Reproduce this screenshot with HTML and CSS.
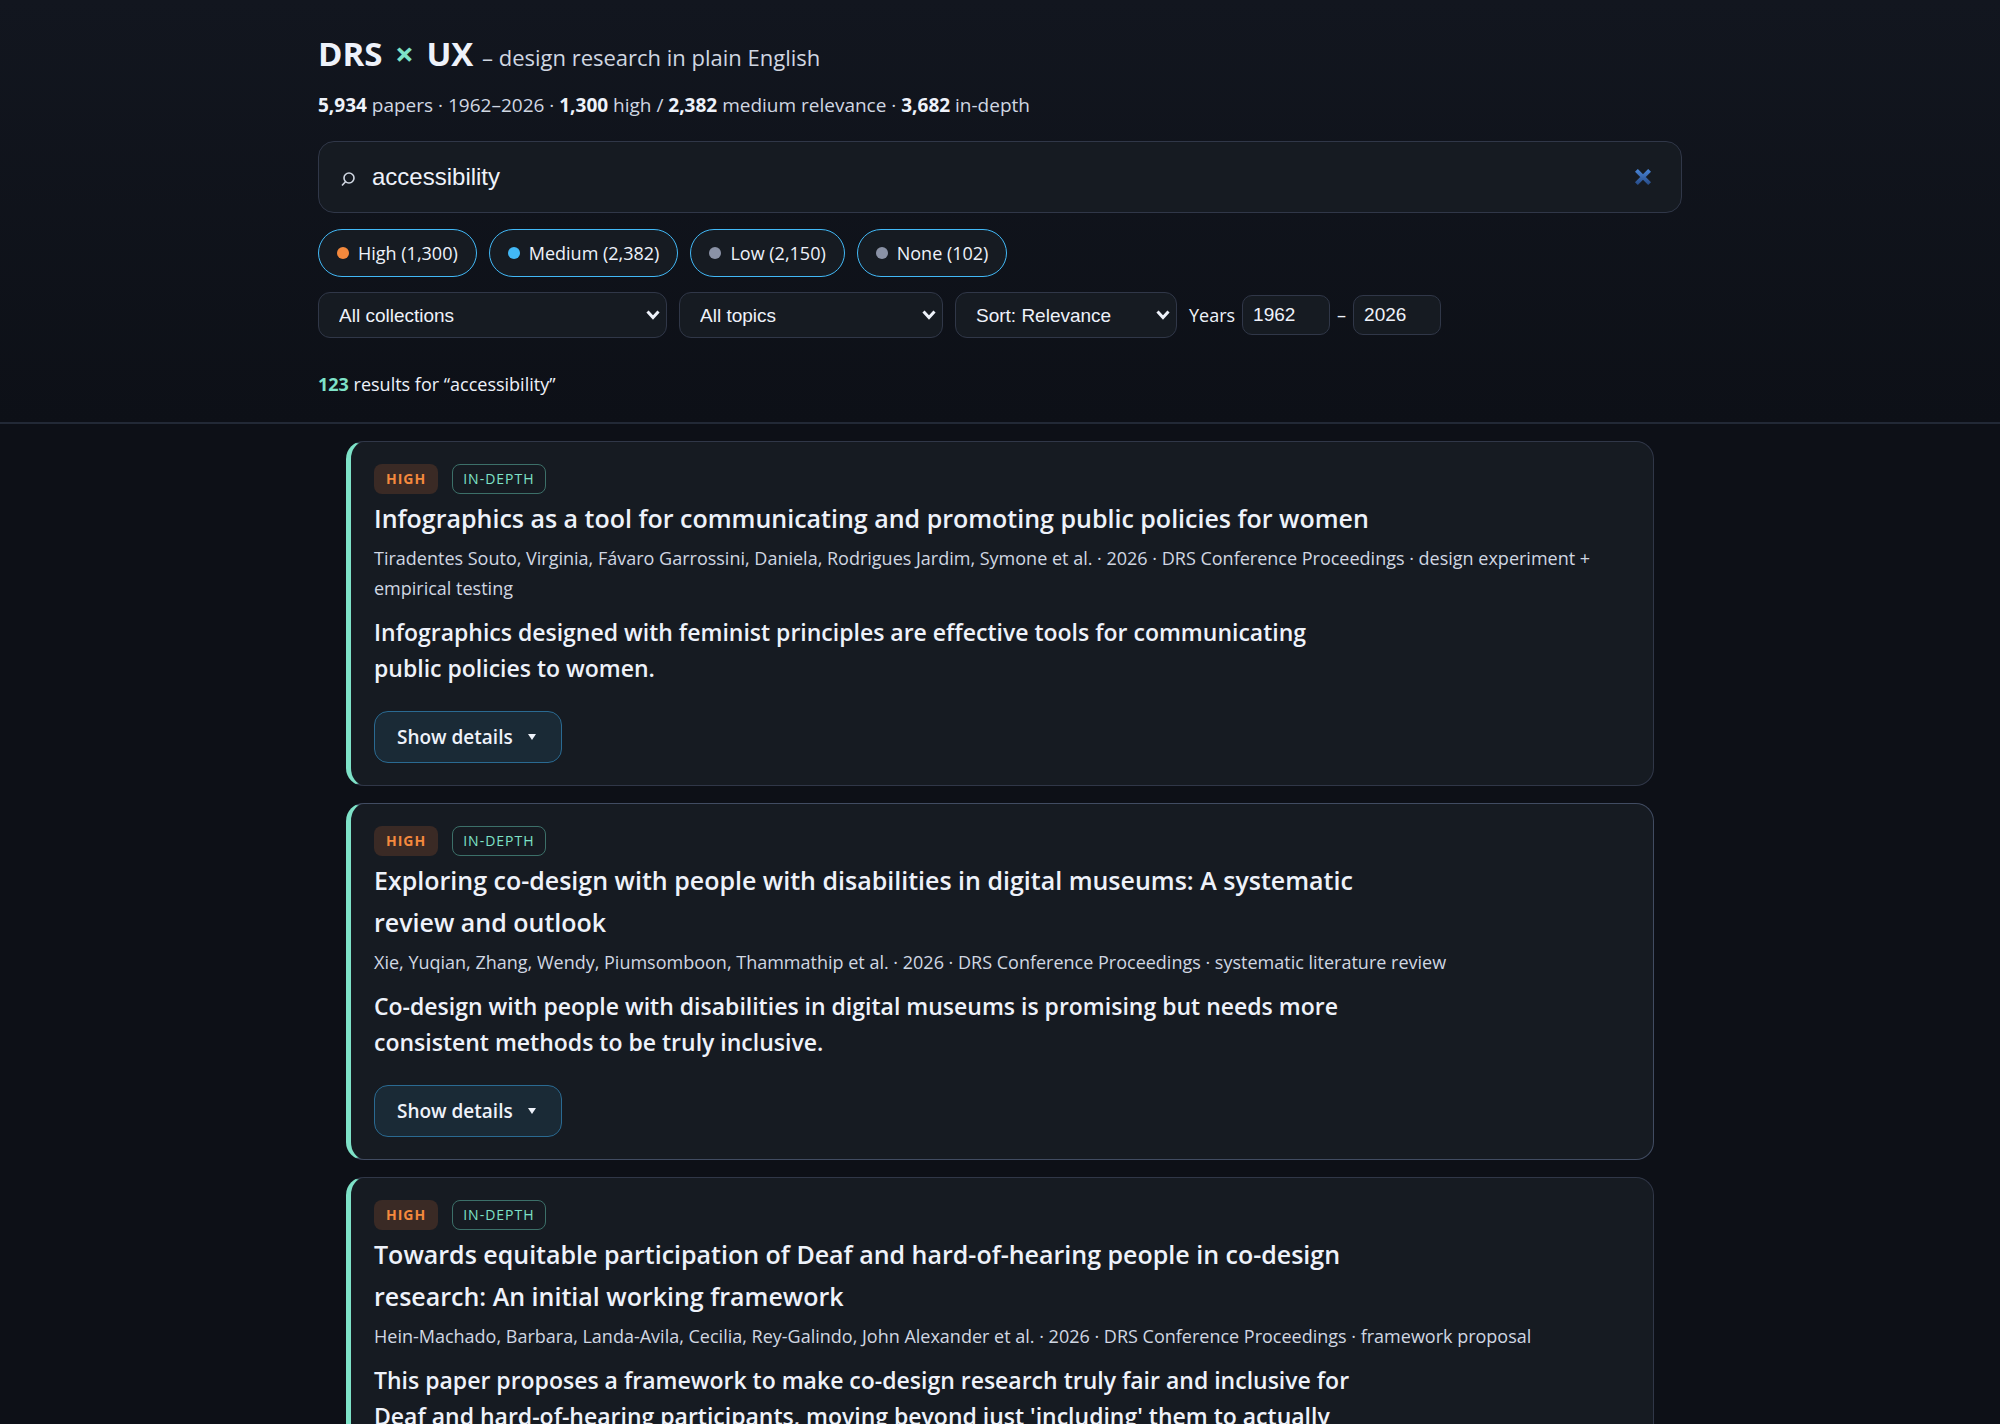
FILE: index.html
```html
<!DOCTYPE html>
<html lang="en">
<head>
    <meta charset="UTF-8">
    <meta name="viewport" content="width=device-width, initial-scale=1.0">
    <title>DRS × UX – design research in plain English</title>
    <link rel="stylesheet" href="styles.css">
</head>
<body>
    <header class="site-header">
        <div class="header-inner">
            <h1>DRS <span class="accent">×</span> UX <span class="tagline">– design research in plain English</span></h1>
            <p class="stats"><b>5,934</b> papers · 1962–2026 · <b>1,300</b> high / <b>2,382</b> medium relevance · <b>3,682</b> in-depth</p>

            <div class="search">
                <svg class="search-icon" viewBox="0 0 14 16" aria-hidden="true"><circle cx="8" cy="6" r="5"/><path d="M4.5 9.7 1 13.5"/></svg>
                <input type="search" aria-label="Search papers" value="accessibility">
                <button type="button" class="clear" aria-label="Clear search">
                    <svg viewBox="0 0 16 16" aria-hidden="true">
                        <defs><linearGradient id="clear-fill" gradientUnits="userSpaceOnUse" x1="0" y1="0" x2="0" y2="16"><stop offset="0" stop-color="#4a86d8"/><stop offset="1" stop-color="#264a86"/></linearGradient></defs>
                        <path d="M1.4 1.4 14.6 14.6M14.6 1.4 1.4 14.6" stroke="url(#clear-fill)"/>
                    </svg>
                </button>
            </div>

            <div class="chips">
                <button type="button" class="chip"><span class="dot dot-high"></span>High (1,300)</button>
                <button type="button" class="chip"><span class="dot dot-medium"></span>Medium (2,382)</button>
                <button type="button" class="chip"><span class="dot"></span>Low (2,150)</button>
                <button type="button" class="chip"><span class="dot"></span>None (102)</button>
            </div>

            <div class="filters">
                <div class="select select-collection">
                    <select aria-label="Collection"><option>All collections</option></select>
                    <svg viewBox="0 0 14 10" aria-hidden="true"><path d="M1.5 1.5 7 7.5 12.5 1.5"/></svg>
                </div>
                <div class="select select-topic">
                    <select aria-label="Topic"><option>All topics</option></select>
                    <svg viewBox="0 0 14 10" aria-hidden="true"><path d="M1.5 1.5 7 7.5 12.5 1.5"/></svg>
                </div>
                <div class="select select-sort">
                    <select aria-label="Sort"><option>Sort: Relevance</option></select>
                    <svg viewBox="0 0 14 10" aria-hidden="true"><path d="M1.5 1.5 7 7.5 12.5 1.5"/></svg>
                </div>
                <div class="years">
                    <label for="year-from">Years</label>
                    <input type="number" id="year-from" value="1962">
                    <span>–</span>
                    <input type="number" aria-label="To year" value="2026">
                </div>
            </div>

            <p class="result-count"><b>123</b> results for “accessibility”</p>
        </div>
    </header>

    <main class="results">
        <article class="card">
            <div class="badges"><span class="badge badge-high">HIGH</span><span class="badge badge-depth">IN-DEPTH</span></div>
            <h2>Infographics as a tool for communicating and promoting public policies for women</h2>
            <p class="meta">Tiradentes Souto, Virginia, Fávaro Garrossini, Daniela, Rodrigues Jardim, Symone et al. · 2026 · DRS Conference Proceedings · design experiment + empirical testing</p>
            <p class="summary">Infographics designed with feminist principles are effective tools for communicating public policies to women.</p>
            <button type="button" class="details">Show details <svg viewBox="0 0 8 6" aria-hidden="true"><path d="M0 0H8L4 6Z"/></svg></button>
        </article>

        <article class="card card-active">
            <div class="badges"><span class="badge badge-high">HIGH</span><span class="badge badge-depth">IN-DEPTH</span></div>
            <h2>Exploring co-design with people with disabilities in digital museums: A systematic review and outlook</h2>
            <p class="meta">Xie, Yuqian, Zhang, Wendy, Piumsomboon, Thammathip et al. · 2026 · DRS Conference Proceedings · systematic literature review</p>
            <p class="summary">Co-design with people with disabilities in digital museums is promising but needs more consistent methods to be truly inclusive.</p>
            <button type="button" class="details">Show details <svg viewBox="0 0 8 6" aria-hidden="true"><path d="M0 0H8L4 6Z"/></svg></button>
        </article>

        <article class="card">
            <div class="badges"><span class="badge badge-high">HIGH</span><span class="badge badge-depth">IN-DEPTH</span></div>
            <h2>Towards equitable participation of Deaf and hard-of-hearing people in co-design research: An initial working framework</h2>
            <p class="meta">Hein-Machado, Barbara, Landa-Avila, Cecilia, Rey-Galindo, John Alexander et al. · 2026 · DRS Conference Proceedings · framework proposal</p>
            <p class="summary">This paper proposes a framework to make co-design research truly fair and inclusive for Deaf and hard-of-hearing participants, moving beyond just 'including' them to actually</p>
            <button type="button" class="details">Show details <svg viewBox="0 0 8 6" aria-hidden="true"><path d="M0 0H8L4 6Z"/></svg></button>
        </article>
    </main>
</body>
</html>
```

FILE: styles.css
```css
:root {
    --bg: #0d1017;
    --panel: #161b22;
    --line: #303748;
    --text: #eef2fa;
    --muted: #d0d7e2;
    --mint: #7ee2c8;
    --blue: #42b8f6;
    --orange: #f4893d;
}

* { box-sizing: border-box; }

body {
    margin: 0;
    background: var(--bg);
    color: var(--text);
    font-family: "Segoe UI", "Open Sans", sans-serif;
    font-size: 18px;
    line-height: 30px;
}

h1, h2, p { margin: 0; }

/* header */
.site-header {
    background: linear-gradient(#12161f, var(--bg));
    border-bottom: 2px solid #222936;
    padding: 30px 28px 23px;
}
.header-inner {
    max-width: 1364px;
    margin: 0 auto;
}
h1 {
    font-size: 33px;
    line-height: 48px;
    font-weight: 700;
}
.accent {
    margin: 0 4px;
    color: var(--mint);
}
.tagline {
    font-size: 22px;
    font-weight: 400;
    color: var(--muted);
}
.stats {
    margin: 9px 0 21px;
    font-size: 19px;
    color: var(--muted);
}
.stats b { color: var(--text); }

.search {
    display: flex;
    align-items: center;
    height: 72px;
    padding: 0 30px 0 22px;
    background: var(--panel);
    border: 1px solid var(--line);
    border-radius: 16px;
}
.search-icon {
    width: 14px;
    height: 16px;
    margin: 6px 17px 0 0;
    fill: none;
    stroke: var(--muted);
    stroke-width: 1.6;
}
.search input {
    flex: 1;
    min-width: 0;
    padding: 0;
    border: 0;
    outline: 0;
    background: none;
    color: var(--text);
    font: 24px "Liberation Sans", Arial, sans-serif;
}
.search input::-webkit-search-cancel-button { display: none; }
.clear {
    display: flex;
    padding: 0;
    border: 0;
    background: none;
}
.clear svg {
    width: 16px;
    height: 16px;
    fill: none;
    stroke-width: 4;
}

.chips {
    display: flex;
    flex-wrap: wrap;
    gap: 12px;
    margin: 16px 0 15px;
}
.chip {
    display: flex;
    align-items: center;
    gap: 9px;
    height: 48px;
    padding: 0 18px;
    background: var(--panel);
    border: 1px solid var(--blue);
    border-radius: 24px;
    color: var(--text);
    font-family: inherit;
    font-size: 18px;
}
.dot {
    width: 12px;
    height: 12px;
    border-radius: 50%;
    background: #8a92a6;
}
.dot-high { background: var(--orange); }
.dot-medium { background: var(--blue); }

.filters {
    display: flex;
    flex-wrap: wrap;
    align-items: center;
    gap: 12px;
}
.select {
    display: grid;
    align-items: center;
}
.select select,
.select svg {
    grid-area: 1 / 1;
}
.select select {
    appearance: none;
    height: 46px;
    padding: 0 20px;
    background: var(--panel);
    border: 1px solid var(--line);
    border-radius: 12px;
    color: var(--text);
    font: 19px "Liberation Sans", Arial, sans-serif;
}
.select svg {
    justify-self: end;
    width: 14px;
    height: 10px;
    margin-right: 7px;
    fill: none;
    stroke: var(--text);
    stroke-width: 3;
    pointer-events: none;
}
.select-collection { width: 349px; }
.select-topic { width: 264px; }
.select-sort { width: 222px; }

.years {
    display: flex;
    align-items: center;
    gap: 7px;
}
.years input {
    width: 88px;
    height: 40px;
    padding: 0 10px;
    appearance: textfield;
    background: var(--panel);
    border: 1px solid var(--line);
    border-radius: 10px;
    color: var(--text);
    font: 19px "Liberation Sans", Arial, sans-serif;
}
.years input::-webkit-inner-spin-button { display: none; }

.result-count { margin-top: 31px; }
.result-count b { color: var(--mint); }

/* results */
.results {
    display: flex;
    flex-direction: column;
    gap: 17px;
    max-width: 1364px;
    margin: 0 auto;
    padding: 17px 28px 40px;
}
.card {
    padding: 22px 26px 22px 23px;
    background: var(--panel);
    border: 1px solid var(--line);
    border-left: 5px solid var(--mint);
    border-radius: 18px;
}
.card-active {
    border-color: #414c62;
    border-left-color: var(--mint);
}
.badges {
    display: flex;
    gap: 14px;
}
.badge {
    height: 30px;
    padding: 0 12px;
    border-radius: 8px;
    font-size: 14px;
    letter-spacing: 1px;
}
.badge-high {
    background: #3a2a25;
    color: var(--orange);
    font-weight: 700;
}
.badge-depth {
    padding: 0 10px;
    border: 1px solid #3c7069;
    line-height: 28px;
    color: var(--mint);
}
.card h2 {
    max-width: 1000px;
    margin: 3px 0 4px;
    font-size: 25px;
    line-height: 42px;
    font-weight: 600;
}
.meta { color: var(--muted); }
.summary {
    max-width: 980px;
    margin: 11px 0 25px;
    font-size: 23px;
    line-height: 36px;
    font-weight: 600;
}
.details {
    display: flex;
    align-items: center;
    gap: 15px;
    height: 52px;
    padding: 0 25px 0 22px;
    background: #1a2a36;
    border: 1px solid #2a6a92;
    border-radius: 14px;
    color: var(--text);
    font-family: inherit;
    font-size: 19px;
    font-weight: 600;
}
.details svg {
    width: 8px;
    height: 6px;
    fill: currentColor;
}
```
